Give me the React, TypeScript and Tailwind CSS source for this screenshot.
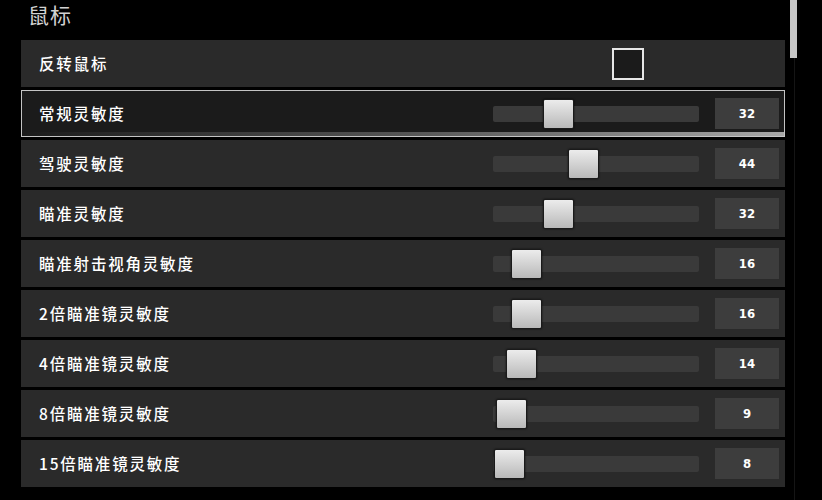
import React from "react";

const rows: { label: string; value: number; off: number }[] = [
  { label: "常规灵敏度", value: 32, off: 50 },
  { label: "驾驶灵敏度", value: 44, off: 75 },
  { label: "瞄准灵敏度", value: 32, off: 50 },
  { label: "瞄准射击视角灵敏度", value: 16, off: 18 },
  { label: "2倍瞄准镜灵敏度", value: 16, off: 18 },
  { label: "4倍瞄准镜灵敏度", value: 14, off: 13 },
  { label: "8倍瞄准镜灵敏度", value: 9, off: 3 },
  { label: "15倍瞄准镜灵敏度", value: 8, off: 1 },
];

const cjk = { fontFamily: '"Noto Sans CJK SC", "Noto Sans", sans-serif' };
const num = { fontFamily: '"DejaVu Sans Condensed", "DejaVu Sans", sans-serif' };

function Slider({ off }: { off: number }) {
  return (
    <div className="relative w-[206px] h-[16px] bg-[#3a3a3a] rounded-[2px]">
      <div
        className="absolute top-[-7px] w-[31px] h-[30px] rounded-[2px] border border-[#1a1a1a] bg-gradient-to-b from-[#ececec] to-[#b9b9b9] shadow-[0_0_2px_rgba(0,0,0,0.8)]"
        style={{ left: off }}
      />
    </div>
  );
}

export default function App() {
  return (
    <div className="relative w-[822px] h-[500px] bg-black overflow-hidden">
      <div className="h-[40px] pl-[28px] pt-[2px]">
        <div className="text-[21px] leading-[24px] text-[#d2d2d2] tracking-[1px]" style={cjk}>
          鼠标
        </div>
      </div>
      <div className="ml-[21px] w-[764px] flex flex-col gap-[3px]">
        <div className="h-[47px] flex items-center bg-[#2a2a2a] pl-[18px]">
          <div className="w-[454px] text-[15.5px] font-medium text-white tracking-[1.8px]" style={cjk}>
            反转鼠标
          </div>
          <div className="ml-[119px] w-[32px] h-[32px] border-2 border-[#e6e6e6] bg-[#1b1b1b]" />
        </div>
        {rows.map((r, i) => {
          const active = i === 0;
          return (
            <div
              key={r.label}
              className={
                active
                  ? "relative h-[47px] flex items-center bg-[#1b1b1b] border border-[#c4c4c4] pl-[17px] pr-[5px]"
                  : "relative h-[47px] flex items-center bg-[#2a2a2a] pl-[18px] pr-[6px]"
              }
            >
              {active && (
                <div className="absolute left-0 right-0 bottom-0 h-[4px] bg-gradient-to-r from-transparent via-[#555] to-[#a8a8a8]" />
              )}
              <div className="w-[454px] text-[15.5px] font-medium text-white tracking-[1.8px]" style={cjk}>
                {r.label}
              </div>
              <Slider off={r.off} />
              <div
                className="ml-[16px] w-[64px] h-[31px] bg-[#3d3d3d] flex items-center justify-center text-white text-[13px] font-bold"
                style={num}
              >
                {r.value}
              </div>
            </div>
          );
        })}
      </div>
      <div className="absolute left-[794px] top-[58px] w-[1px] h-[442px] bg-[#151515]" />
      <div className="absolute left-[790px] top-0 w-[7px] h-[58px] bg-[#c6c6c6]" />
    </div>
  );
}
